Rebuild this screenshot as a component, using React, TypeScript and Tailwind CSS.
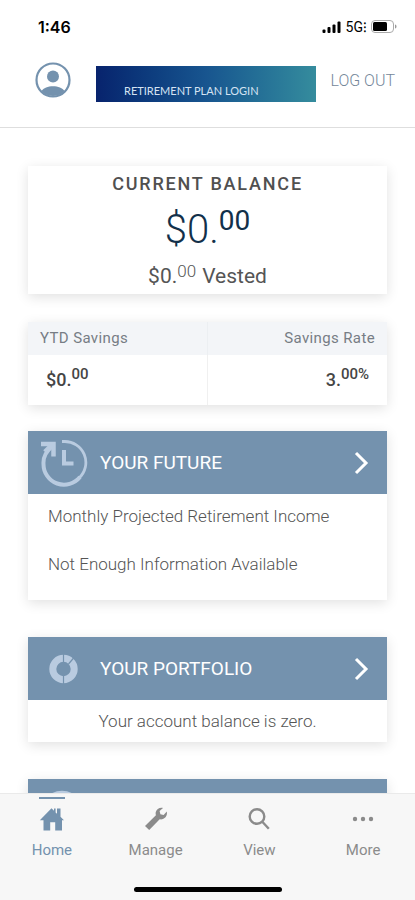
import type { ReactNode } from 'react'

type Tab = { label: string; icon: ReactNode; active?: boolean }

function HomeIcon() {
  return (
    <svg viewBox="0 0 26 24" className="h-6 w-[26px]" fill="currentColor" aria-hidden="true">
      <path d="M12.500 1.200 15 3.800V1.600h1.600v3.800l1.400 1.400V1.600h3.500v8.200l3.500 3.400h-2V23.500h-6.800v-8.300h-5v8.300H4.500V13.200H.8z" />
    </svg>
  )
}

function WrenchIcon() {
  return (
    <svg viewBox="0 0 24 24" className="h-6 w-6" fill="currentColor" aria-hidden="true">
      <path d="M22.800 4.600 19.600 8l-3.200-.8-.8-3.200 3.400-3C15.700.2 12.400 2.200 11.700 5.300c-.2 1.100-.1 2 .2 3L1 18.900l4.200 4.200L15.700 12.300c4 .8 8.200-2.600 7.100-7.700z" />
    </svg>
  )
}

function SearchIcon() {
  return (
    <svg viewBox="0 0 24 24" className="h-6 w-6" fill="none" stroke="currentColor" strokeWidth="2.400" aria-hidden="true">
      <circle cx="10" cy="9.500" r="7.300" />
      <path d="m15.300 14.800 6.500 7" />
    </svg>
  )
}

function DotsIcon() {
  return (
    <svg viewBox="0 0 24 24" className="h-6 w-6" fill="currentColor" aria-hidden="true">
      <circle cx="4" cy="12" r="2.200" />
      <circle cx="12" cy="12" r="2.200" />
      <circle cx="20" cy="12" r="2.200" />
    </svg>
  )
}

function FutureIcon() {
  return (
    <svg viewBox="0 0 48 48" className="h-12 w-12" fill="none" stroke="currentColor" aria-hidden="true">
      <path d="M22 2.500h2A21 21 0 0 1 39 39" strokeWidth="2.800" />
      <path d="M40 38A20.500 20.500 0 0 1 3.500 25C3 18 6 12.500 12 7.500" strokeWidth="4" />
      <path d="M1 5h12.500v12.500" strokeWidth="4.500" />
      <path d="M5 13l7-7" strokeWidth="5" />
      <path d="M24 11v13.500h9.500" strokeWidth="4" />
    </svg>
  )
}

function DonutIcon() {
  return (
    <svg viewBox="0 0 48 48" className="h-12 w-12" fill="none" aria-hidden="true">
      <circle cx="23.500" cy="24" r="10.700" stroke="currentColor" strokeWidth="7" />
      <path d="M23.500 9v8M23.500 31v8M28.500 19l6-7" stroke="#7492ae" strokeWidth="1.200" />
    </svg>
  )
}

function RingIcon() {
  return (
    <svg viewBox="0 0 48 48" className="h-12 w-12" fill="none" stroke="currentColor" aria-hidden="true">
      <circle cx="22" cy="25" r="20" strokeWidth="2.500" />
    </svg>
  )
}

function StatusIcons() {
  return (
    <div className="flex items-center gap-1">
      <svg viewBox="0 0 20 12" className="h-3 w-5" aria-hidden="true">
        <rect x="0.500" y="8.500" width="3" height="3.500" rx="1" />
        <rect x="5.500" y="6" width="3" height="6" rx="1" />
        <rect x="10.500" y="3.500" width="3" height="8.500" rx="1" />
        <rect x="15.500" y="0.500" width="3" height="11.500" rx="1" />
      </svg>
      <span className="text-sm leading-4">5G⁝</span>
      <svg viewBox="0 0 26 14" className="h-[14px] w-[26px]" aria-hidden="true">
        <rect x="0.500" y="0.500" width="22" height="12" rx="3.500" fill="none" stroke="#aaa" />
        <rect x="2" y="2" width="14" height="9" rx="1.500" />
        <path d="M24 4.500c2 .5 2 3.500 0 4z" fill="#999" />
      </svg>
    </div>
  )
}

type CardProps = { title?: string; icon: ReactNode; children?: ReactNode }

function Card({ title, icon, children }: CardProps) {
  return (
    <section className="bg-white shadow-[0_3px_12px_rgba(0,0,0,0.12)]">
      <button className="flex h-[63px] w-full items-center bg-[#7492ae] pr-4 pl-3 text-left text-white">
        <span className="text-[#b9cbe0]">{icon}</span>
        <span className="ml-3 flex-1 text-[19px] leading-6">{title}</span>
        <svg viewBox="0 0 20 24" className="h-6 w-5" fill="none" stroke="currentColor" strokeWidth="3" aria-hidden="true">
          <path d="m5 2 10 10L5 22" />
        </svg>
      </button>
      {children}
    </section>
  )
}

const tabs: Tab[] = [
  { label: 'Home', icon: <HomeIcon />, active: true },
  { label: 'Manage', icon: <WrenchIcon /> },
  { label: 'View', icon: <SearchIcon /> },
  { label: 'More', icon: <DotsIcon /> },
]

export default function App() {
  return (
    <div className="flex h-screen flex-col bg-white font-[Roboto,'Liberation_Sans',sans-serif] text-[#555]">
      <header className="shrink-0 border-b border-[#dedede] pb-[25px]">
        <div className="flex h-[54px] items-center justify-between pr-[18px] pl-[38px] text-black">
          <span className="font-[Inter,sans-serif] text-base leading-6 font-semibold">1:46</span>
          <StatusIcons />
        </div>
        <div className="flex items-start pt-2 pr-5 pl-[35px]">
          <button aria-label="Profile" className="text-[#7492ae]">
            <svg viewBox="0 0 36 36" className="h-9 w-9" fill="currentColor" aria-hidden="true">
              <circle cx="18" cy="18" r="16.500" fill="none" stroke="currentColor" strokeWidth="2.200" />
              <circle cx="18" cy="14.500" r="6" />
              <path d="M6.500 29c3.500-6.500 19.500-6.500 23 0-5 6.500-18 6.500-23 0z" />
            </svg>
          </button>
          <div className="mt-1 ml-[25px] flex h-9 flex-1 items-end bg-linear-to-r from-[#08236d] via-[#18558f] to-[#358c9d] pb-[3px] pl-7 font-[Lato,sans-serif] text-[11px] leading-4 whitespace-nowrap text-[#d5e3f3]">
            RETIREMENT PLAN LOGIN
          </div>
          <button className="mt-[7px] ml-[14px] text-base font-light whitespace-nowrap text-[#75879a]">LOG OUT</button>
        </div>
      </header>

      <main className="flex-1 overflow-y-auto px-7 pt-[38px] [scrollbar-width:none]">
        <section className="bg-white pt-1 pb-0.5 text-center shadow-[0_3px_12px_rgba(0,0,0,0.12)]">
          <h1 className="text-lg leading-7 font-medium tracking-widest text-[#505050]">CURRENT BALANCE</h1>
          <p className="flex items-start justify-center text-[40px] leading-[56px] font-light text-[#12304a]">
            <span className="pt-1">$0.</span>
            <span className="text-[28px] leading-[46px] font-normal">00</span>
          </p>
          <p className="mt-px flex items-start justify-center text-[21px] leading-8">
            <span className="pt-px">$0.</span>
            <span className="text-[17px] leading-6 font-light">00</span>
            <span className="ml-1.5 pt-px">Vested</span>
          </p>
        </section>

        <table className="mt-7 w-full table-fixed bg-white shadow-[0_3px_12px_rgba(0,0,0,0.12)]">
          <thead className="bg-[#f3f5f8] text-[#777d85]">
            <tr className="h-[33px]">
              <th className="border-r border-[#eceff2] px-3 text-left text-[15px] font-normal tracking-wide">YTD Savings</th>
              <th className="px-3 text-right text-[15px] font-normal tracking-wide">Savings Rate</th>
            </tr>
          </thead>
          <tbody className="font-medium text-[#454545]">
            <tr className="h-[50px]">
              <td className="border-r border-[#f0f0f0] px-[18px]">
                <div className="flex items-start text-lg leading-7">
                  <span>$0.</span>
                  <span className="text-[15px] leading-4">00</span>
                </div>
              </td>
              <td className="px-[18px]">
                <div className="flex items-start justify-end text-lg leading-7">
                  <span>3.</span>
                  <span className="text-[15px] leading-4">00%</span>
                </div>
              </td>
            </tr>
          </tbody>
        </table>

        <div className="mt-[26px] flex flex-col gap-[37px]">
          <Card title="YOUR FUTURE" icon={<FutureIcon />}>
            <div className="flex flex-col gap-6 px-5 pt-[10px] pb-6 text-[17px] leading-6 font-light text-[#555]">
              <p>Monthly Projected Retirement Income</p>
              <p>Not Enough Information Available</p>
            </div>
          </Card>
          <Card title="YOUR PORTFOLIO" icon={<DonutIcon />}>
            <p className="py-[9px] text-center text-[17px] leading-6 font-light text-[#555]">Your account balance is zero.</p>
          </Card>
          <Card icon={<RingIcon />} />
        </div>
      </main>

      <nav className="shrink-0 border-t border-[#eaeaea] bg-[#f7f7f7] pb-2">
        <div className="grid grid-cols-4">
          {tabs.map(tab => (
            <button key={tab.label} className={tab.active ? 'flex flex-col items-center text-[#7492ae]' : 'flex flex-col items-center text-[#8b8b8b]'}>
              <span className={tab.active ? 'mt-[3px] mb-2 h-0.5 w-[26px] bg-[#7492ae]' : 'mt-[3px] mb-2 h-0.5 w-[26px]'} />
              {tab.icon}
              <span className="mt-[7px] text-[15px] leading-6">{tab.label}</span>
            </button>
          ))}
        </div>
        <div className="mx-auto mt-[25px] h-[5px] w-[148px] rounded-full bg-black" />
      </nav>
    </div>
  )
}
